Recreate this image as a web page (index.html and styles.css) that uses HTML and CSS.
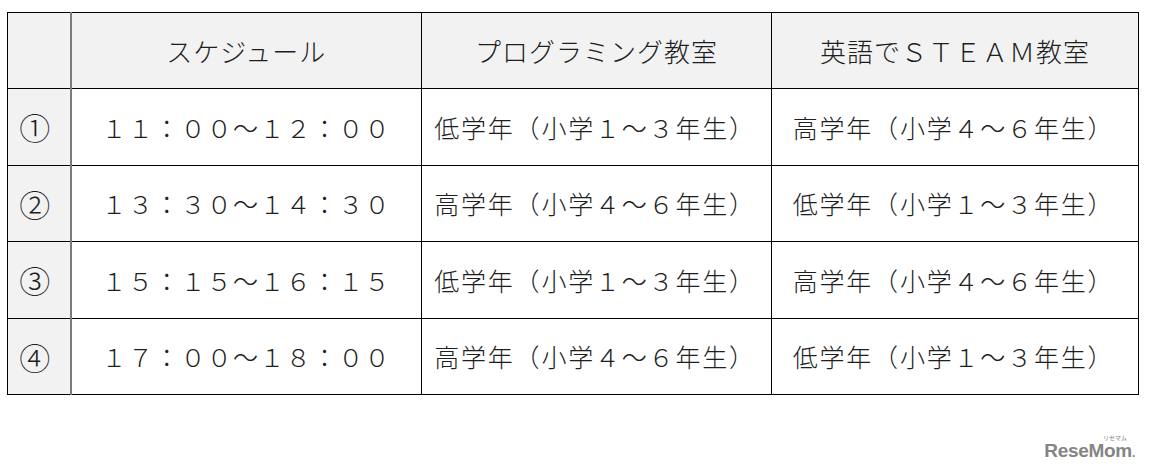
FILE: index.html
```html
<!DOCTYPE html>
<html lang="ja">
<head>
<meta charset="utf-8">
<link rel="stylesheet" href="styles.css">
</head>
<body>
<div class="page">
  <table class="schedule">
    <colgroup>
      <col class="c-num">
      <col class="c-time">
      <col class="c-prog">
      <col class="c-eng">
    </colgroup>
    <thead>
      <tr>
        <th class="num"></th>
        <th>スケジュール</th>
        <th>プログラミング教室</th>
        <th>英語でＳＴＥＡＭ教室</th>
      </tr>
    </thead>
    <tbody>
      <tr>
        <td class="num">①</td>
        <td class="time">１１：００～１２：００</td>
        <td class="grade">低学年（小学１～３年生）</td>
        <td class="grade">高学年（小学４～６年生）</td>
      </tr>
      <tr>
        <td class="num">②</td>
        <td class="time">１３：３０～１４：３０</td>
        <td class="grade">高学年（小学４～６年生）</td>
        <td class="grade">低学年（小学１～３年生）</td>
      </tr>
      <tr>
        <td class="num">③</td>
        <td class="time">１５：１５～１６：１５</td>
        <td class="grade">低学年（小学１～３年生）</td>
        <td class="grade">高学年（小学４～６年生）</td>
      </tr>
      <tr>
        <td class="num">④</td>
        <td class="time">１７：００～１８：００</td>
        <td class="grade">高学年（小学４～６年生）</td>
        <td class="grade">低学年（小学１～３年生）</td>
      </tr>
    </tbody>
  </table>
  <div class="footer">
    <div class="logo">
      <span class="logo-kana">リセマム</span>
      <span class="logo-text">ReseMom<span class="logo-dot">.</span></span>
    </div>
  </div>
</div>
</body>
</html>
```

FILE: styles.css
```css
html, body {
  margin: 0;
  padding: 0;
  background: #ffffff;
}

.page {
  width: 1150px;
  height: 474px;
  padding: 12px 0 0 7px;
  box-sizing: border-box;
  display: flex;
  flex-direction: column;
}

.schedule {
  border-collapse: collapse;
  table-layout: fixed;
  width: 1131px;
  font-family: "Noto Sans CJK JP", "Liberation Serif", sans-serif;
  font-weight: 300;
  color: #1e1e1e;
}

.c-num { width: 63px; }
.c-time { width: 351px; }
.c-prog { width: 350px; }
.c-eng { width: 367px; }

.schedule th,
.schedule td {
  border: 1px solid #000;
  padding: 0;
  text-align: center;
  vertical-align: middle;
  white-space: nowrap;
}

.schedule th {
  height: 75px;
  background: #f2f2f2;
  font-weight: 300;
  font-size: 26px;
  letter-spacing: 1px;
}

.schedule td {
  height: 75.5px;
  font-size: 25px;
}

.schedule .num {
  background: #f2f2f2;
  border-right: 2px solid #7a7a7a;
  padding-right: 8px;
  font-size: 31px;
}

.schedule .time {
  letter-spacing: 1.3px;
}

.schedule .grade {
  padding-right: 3px;
  letter-spacing: 1.8px;
}

.footer {
  display: flex;
  justify-content: flex-end;
  padding: 46px 15px 0 0;
}

.logo {
  position: relative;
  font-family: "Liberation Sans", Arial, sans-serif;
  font-weight: bold;
  color: #858585;
}

.logo-text {
  font-size: 19px;
  letter-spacing: -0.3px;
  line-height: 20px;
  display: block;
}

.logo-dot {
  font-size: 12px;
}

.logo-kana {
  position: absolute;
  right: 8px;
  top: -6px;
  font-family: "Noto Sans CJK JP", sans-serif;
  font-size: 6px;
  font-weight: normal;
  line-height: 6px;
}
```
